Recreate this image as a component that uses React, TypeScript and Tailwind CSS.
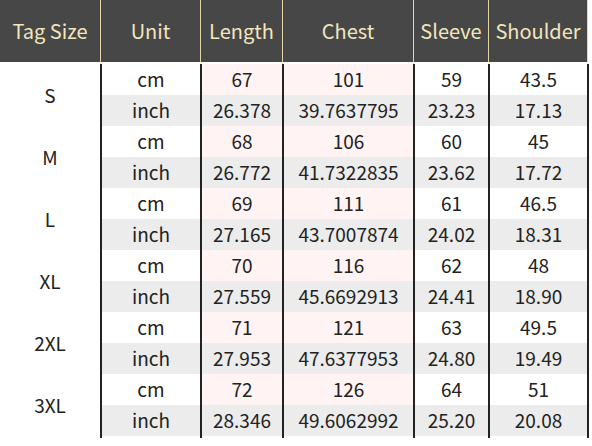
import React from 'react';

type Row = {
  size: string;
  cm: string[];
  inch: string[];
};

const rows: Row[] = [
  { size: 'S', cm: ['67', '101', '59', '43.5'], inch: ['26.378', '39.7637795', '23.23', '17.13'] },
  { size: 'M', cm: ['68', '106', '60', '45'], inch: ['26.772', '41.7322835', '23.62', '17.72'] },
  { size: 'L', cm: ['69', '111', '61', '46.5'], inch: ['27.165', '43.7007874', '24.02', '18.31'] },
  { size: 'XL', cm: ['70', '116', '62', '48'], inch: ['27.559', '45.6692913', '24.41', '18.90'] },
  { size: '2XL', cm: ['71', '121', '63', '49.5'], inch: ['27.953', '47.6377953', '24.80', '19.49'] },
  { size: '3XL', cm: ['72', '126', '64', '51'], inch: ['28.346', '49.6062992', '25.20', '20.08'] },
];

const headers = ['Tag Size', 'Unit', 'Length', 'Chest', 'Sleeve', 'Shoulder'];

// column widths after the Tag Size column
const widths = ['w-[100px]', 'w-[82px]', 'w-[131px]', 'w-[75px]', 'w-[99px]'];

// cm rows: Length & Chest get a faint pink, the rest stay white
const cmBg = ['bg-white', 'bg-[#fff3f3]', 'bg-[#fff3f3]', 'bg-white', 'bg-white'];

const Line: React.FC<{ cells: string[]; bgs: string[] }> = ({ cells, bgs }) => (
  <div className="flex h-[31px]">
    {cells.map((v, i) => (
      <div
        key={i}
        className={`${widths[i]} ${bgs[i]} flex items-center justify-center border-l-2 border-[#222]`}
      >
        {v}
      </div>
    ))}
    <div className="w-[2px] border-l-2 border-[#222]" />
  </div>
);

const App: React.FC = () => {
  return (
    <div className="w-[592px] h-[446px] bg-white text-[#222] font-['Noto_Sans_CJK_SC','Noto_Sans',sans-serif]">
      <div className="flex h-[62px] text-[20px] text-[#f2e6bd]">
        {headers.map((h, i) => (
          <div
            key={h}
            className={`flex items-center justify-center bg-[#474747] ${
              i === 0 ? 'w-[100px]' : `${widths[i - 1]} border-l border-[#e3d7aa]`
            }`}
          >
            {h}
          </div>
        ))}
        <div className="w-[2px] border-l border-[#e3d7aa]" />
      </div>

      <div className="mt-[2px] flex flex-col text-[19px]">
        {rows.map((r) => (
          <div key={r.size} className="flex">
            <div className="w-[100px] flex items-center justify-center">{r.size}</div>
            <div className="flex flex-col">
              <Line cells={['cm', ...r.cm]} bgs={cmBg} />
              <Line cells={['inch', ...r.inch]} bgs={Array(5).fill('bg-[#ececec]')} />
            </div>
          </div>
        ))}
        <div className="flex h-[2px]">
          <div className="w-[100px]" />
          {widths.map((w) => (
            <div key={w} className={`${w} border-l-2 border-[#222]`} />
          ))}
          <div className="w-[2px] border-l-2 border-[#222]" />
        </div>
      </div>
    </div>
  );
};

export default App;
